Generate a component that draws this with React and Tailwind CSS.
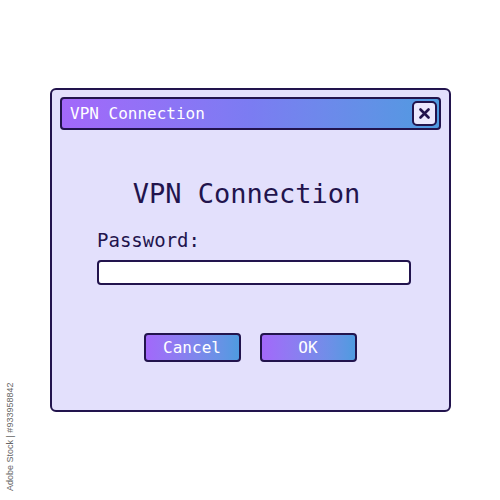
export default function App() {
  const mono = { fontFamily: '"DejaVu Sans Mono", "Liberation Mono", monospace' };
  return (
    <div className="relative w-[500px] h-[500px] bg-white overflow-hidden" style={mono}>
      <div className="pt-[88px] pl-[50px]">
        <div className="w-[401px] h-[324px] rounded-[6px] border-2 border-[#22144d] bg-[#e3e0fc] flex flex-col px-[8px] pt-[7px]">
          <div className="h-[33px] rounded-[4px] border-2 border-[#22144d] bg-gradient-to-r from-[#a268fa] via-[#7b7cf2] to-[#4e9be0] flex items-center justify-between pl-[8px] pr-[2px]">
            <span className="text-white text-[16px] leading-none">VPN Connection</span>
            <div className="w-[25px] h-[25px] rounded-[5px] border-2 border-[#22144d] bg-[#ebe8fd] flex items-center justify-center">
              <svg width="11" height="11" viewBox="0 0 11 11">
                <path d="M1.5 1.5 L9.5 9.5 M9.5 1.5 L1.5 9.5" stroke="#22144d" strokeWidth="2.6" strokeLinecap="round" />
              </svg>
            </div>
          </div>
          <div className="mt-[48px] text-center text-[27px] leading-[32px] text-[#22144d] pr-[8px]">VPN Connection</div>
          <div className="mt-[18px] ml-[37px] text-[19px] leading-[24px] text-[#22144d]">Password:</div>
          <div className="mt-[8px] ml-[37px] w-[314px] h-[25px] rounded-[4px] border-2 border-[#22144d] bg-white"></div>
          <div className="mt-[48px] flex justify-center gap-[19px] pr-[1px]">
            <div className="w-[97px] h-[29px] rounded-[4px] border-2 border-[#22144d] bg-gradient-to-r from-[#a268fa] to-[#4e9be0] flex items-center justify-center text-white text-[16px] leading-none">Cancel</div>
            <div className="w-[97px] h-[29px] rounded-[4px] border-2 border-[#22144d] bg-gradient-to-r from-[#a268fa] to-[#4e9be0] flex items-center justify-center text-white text-[16px] leading-none">OK</div>
          </div>
        </div>
      </div>
      <div className="absolute left-[4px] top-[491px] origin-top-left -rotate-90 whitespace-nowrap text-[9px] leading-[12px] text-[#666]" style={{ fontFamily: '"Liberation Sans", Arial, sans-serif' }}>
        Adobe Stock | #933958842
      </div>
    </div>
  );
}
